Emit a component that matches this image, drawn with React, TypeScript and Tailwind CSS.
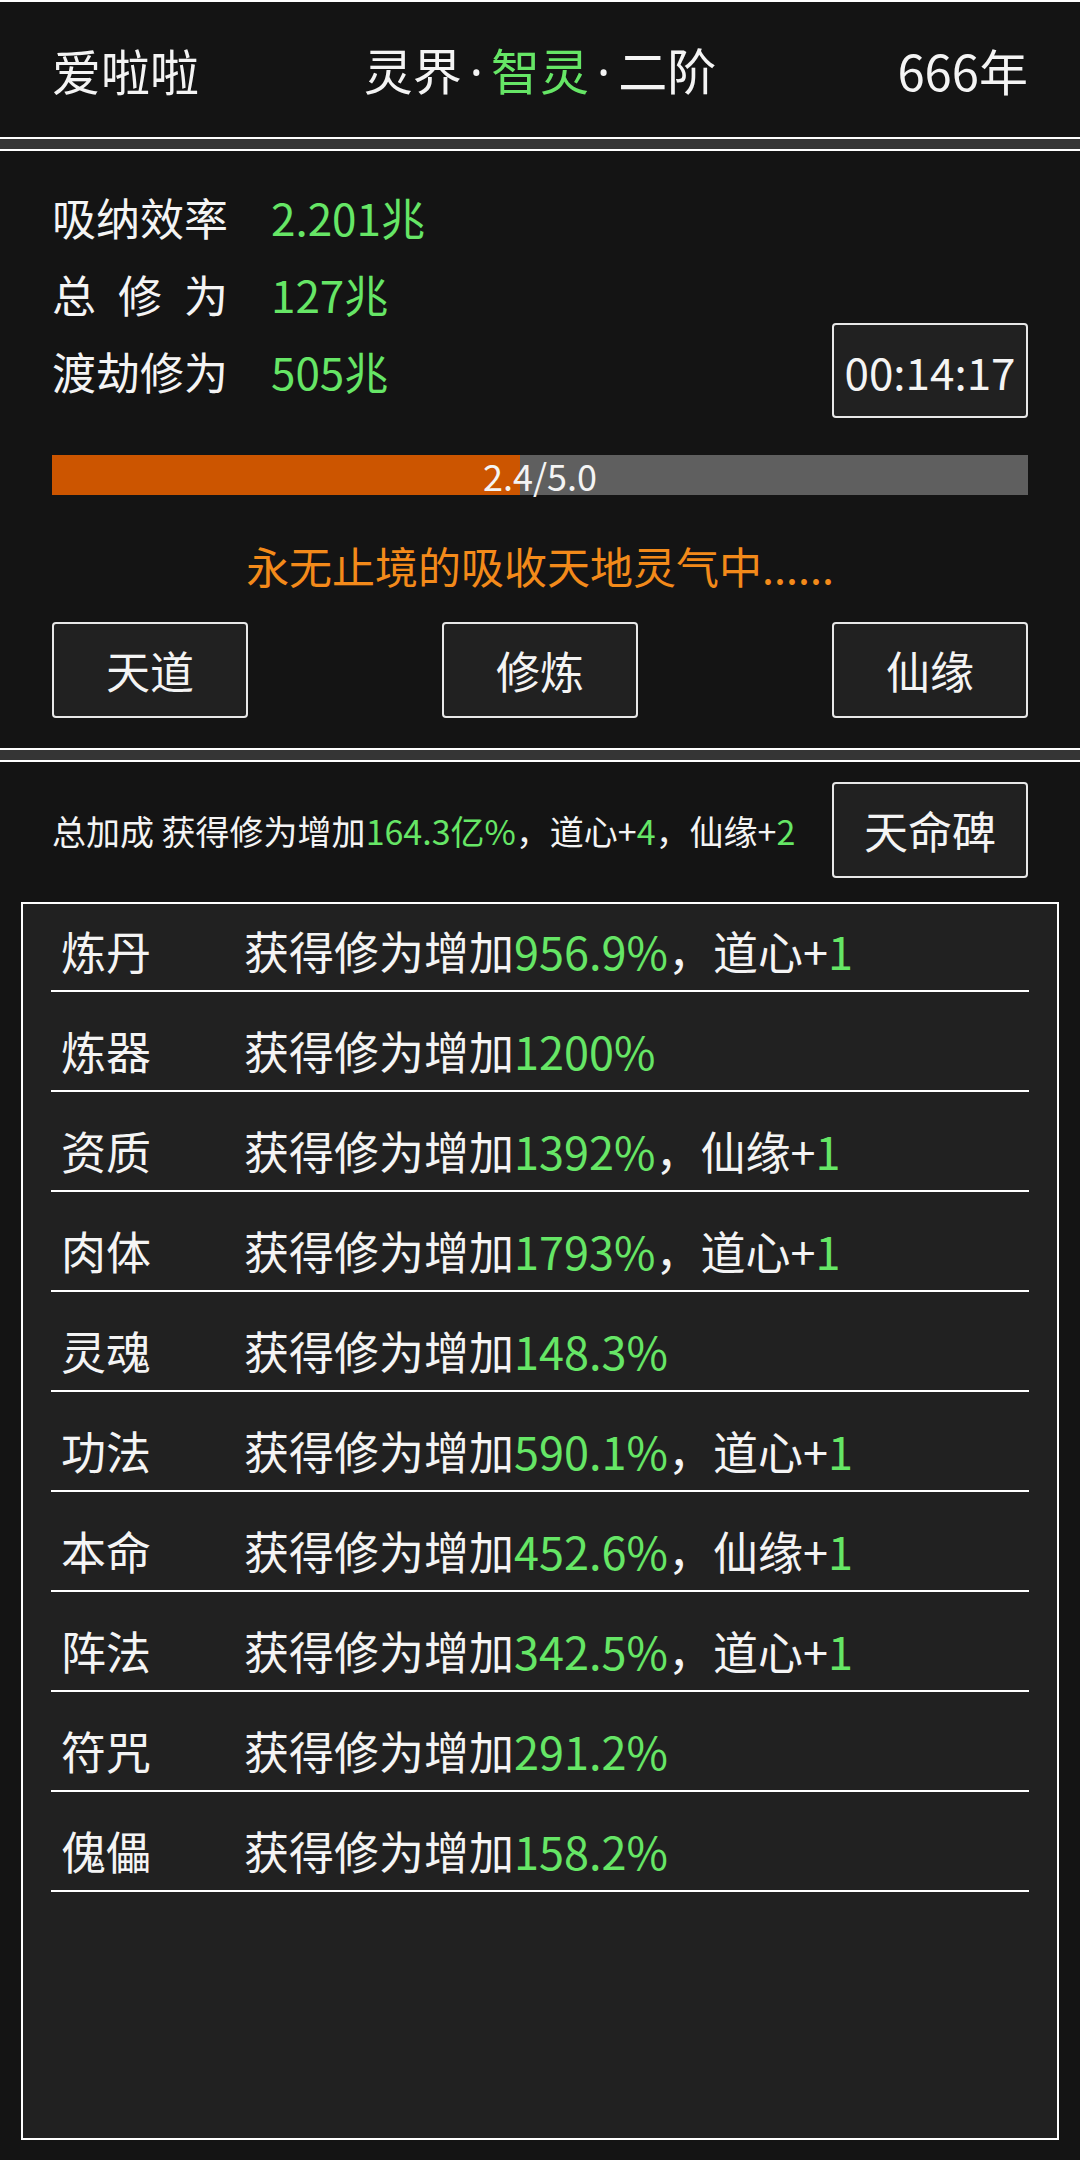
import React from "react";

const GREEN = "text-[#66e666]";

type Row = { name: string; pct: string; extra?: string; extraVal?: string };

const rows: Row[] = [
  { name: "炼丹", pct: "956.9%", extra: "道心+", extraVal: "1" },
  { name: "炼器", pct: "1200%" },
  { name: "资质", pct: "1392%", extra: "仙缘+", extraVal: "1" },
  { name: "肉体", pct: "1793%", extra: "道心+", extraVal: "1" },
  { name: "灵魂", pct: "148.3%" },
  { name: "功法", pct: "590.1%", extra: "道心+", extraVal: "1" },
  { name: "本命", pct: "452.6%", extra: "仙缘+", extraVal: "1" },
  { name: "阵法", pct: "342.5%", extra: "道心+", extraVal: "1" },
  { name: "符咒", pct: "291.2%" },
  { name: "傀儡", pct: "158.2%" },
];

function Separator() {
  return <div className="h-[14px] border-y-2 border-white bg-[#353535]" />;
}

function Dot() {
  return <span className="mx-[8px] font-['Noto_Sans',sans-serif]">·</span>;
}

function Stat({ label, value }: { label: string; value: string }) {
  return (
    <div className="flex h-[77px] items-center">
      <span className="flex w-[176px] justify-between">
        {label.split("").map((c, i) => (
          <span key={i}>{c}</span>
        ))}
      </span>
      <span className={`ml-[43px] ${GREEN}`}>{value}</span>
    </div>
  );
}

function Btn({ children, className = "" }: { children: React.ReactNode; className?: string }) {
  return (
    <div
      className={`flex h-[96px] w-[196px] items-center justify-center rounded-[4px] border-2 border-[#e8e8e8] bg-[#212121] text-[44px] ${className}`}
    >
      {children}
    </div>
  );
}

export default function App() {
  return (
    <div
      className="flex h-[2160px] w-[1080px] flex-col overflow-hidden bg-[#141414] text-[#f4f4f4]"
      style={{ fontFamily: '"Noto Sans CJK SC", "Noto Sans", sans-serif' }}
    >
      {/* header */}
      <header className="grid h-[137px] grid-cols-[1fr_auto_1fr] items-center border-t-2 border-white px-[52px] text-[49px] leading-[60px]">
        <span>爱啦啦</span>
        <span className="whitespace-nowrap text-center">
          灵界<Dot />
          <span className={GREEN}>智灵</span>
          <Dot />
          二阶
        </span>
        <span className="text-right">666年</span>
      </header>

      <Separator />

      {/* status panel */}
      <section className="flex h-[597px] flex-col px-[52px] pt-[27px] text-[44px] leading-[60px]">
        <Stat label="吸纳效率" value="2.201兆" />
        <Stat label="总修为" value="127兆" />
        <div className="flex items-center justify-between">
          <Stat label="渡劫修为" value="505兆" />
          <div className="-my-[9px] flex h-[95px] w-[196px] items-center justify-center rounded-[4px] border-2 border-[#e8e8e8] bg-[#212121]">
            00:14:17
          </div>
        </div>

        <div className="relative mt-[46px] h-[40px] bg-[#5f5f5f]">
          <div className="h-full w-[48%] bg-[#cc5500]" />
          <div className="absolute inset-0 flex items-center justify-center text-[36px] leading-[40px]">
            2.4/5.0
          </div>
        </div>

        <div className="mt-[40px] text-center text-[43px] text-[#f38a1a]">永无止境的吸收天地灵气中......</div>

        <div className="mt-[27px] flex justify-between">
          <Btn>天道</Btn>
          <Btn>修炼</Btn>
          <Btn>仙缘</Btn>
        </div>
      </section>

      <Separator />

      {/* bonus panel */}
      <section className="flex flex-1 flex-col">
        <div className="flex items-center justify-between px-[52px] pt-[20px]">
          <span className="whitespace-nowrap text-[34px]">
            总加成 获得修为增加<span className={GREEN}>164.3亿%</span>，道心+<span className={GREEN}>4</span>，仙缘+
            <span className={GREEN}>2</span>
          </span>
          <Btn className="h-[95px]">天命碑</Btn>
        </div>

        <div className="mx-[21px] mb-[20px] mt-[24px] flex flex-1 flex-col gap-[20px] border-2 border-white bg-[#212121] px-[28px] pt-[8px] text-[45px] leading-[60px]">
          {rows.map((r) => (
            <div key={r.name} className="flex h-[80px] items-center border-b-2 border-white pl-[10px]">
              <span className="w-[183px]">{r.name}</span>
              <span>
                获得修为增加<span className={GREEN}>{r.pct}</span>
                {r.extra && (
                  <>
                    ，{r.extra}
                    <span className={GREEN}>{r.extraVal}</span>
                  </>
                )}
              </span>
            </div>
          ))}
        </div>
      </section>
    </div>
  );
}
